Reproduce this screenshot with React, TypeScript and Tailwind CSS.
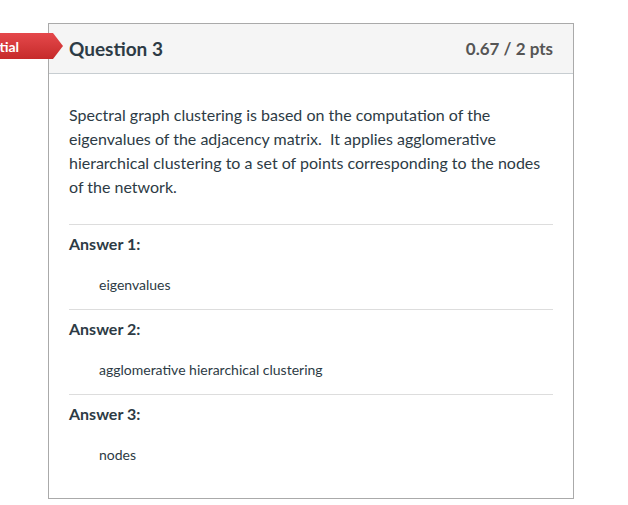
import React from "react";

const answers = [
  { label: "Answer 1:", value: "eigenvalues" },
  { label: "Answer 2:", value: "agglomerative hierarchical clustering" },
  { label: "Answer 3:", value: "nodes" },
];

export default function App() {
  return (
    <div className="relative h-[505px] w-[628px] overflow-hidden bg-white font-['Lato','Liberation_Sans',sans-serif] text-[#2d3b45]">
      <div className="ml-[48px] mt-[23px] w-[526px] border border-[#aaaaaa]">
        <div className="flex h-[50px] items-center justify-between border-b border-[#c7cdd1] bg-[#f5f5f5] pl-[20px] pr-[20px]">
          <h2 className="text-[19px] font-bold leading-none">Question 3</h2>
          <span className="text-[17px] font-bold text-[#555555]">0.67 / 2 pts</span>
        </div>

        <div className="px-[20px] pt-[29px] pb-[33px]">
          <p className="text-[16px] leading-[24px]">
            Spectral graph clustering is based on the computation of the eigenvalues of the adjacency matrix.&nbsp; It applies agglomerative hierarchical clustering to a set of points corresponding to the nodes of the network.
          </p>

          <div className="mt-[25px]">
            {answers.map((a, i) => (
              <div key={i} className="border-t border-[#dddddd]">
                <p className="pt-[7px] text-[16px] font-bold leading-[24px]">{a.label}</p>
                <p className={`pl-[30px] pt-[19px] text-[14px] leading-[20px] ${i < answers.length - 1 ? "pb-[14px]" : ""}`}>
                  {a.value}
                </p>
              </div>
            ))}
          </div>
        </div>
      </div>

      {/* score label overlapping the card edge */}
      <div className="absolute left-[-40px] top-[33px] flex h-[26px] w-[103px] items-center justify-end bg-gradient-to-b from-[#e5484b] to-[#c62a2a] pr-[44px] text-[14px] font-bold text-white [clip-path:polygon(0_0,93px_0,100%_50%,93px_100%,0_100%)]">
        Partial
      </div>
    </div>
  );
}
